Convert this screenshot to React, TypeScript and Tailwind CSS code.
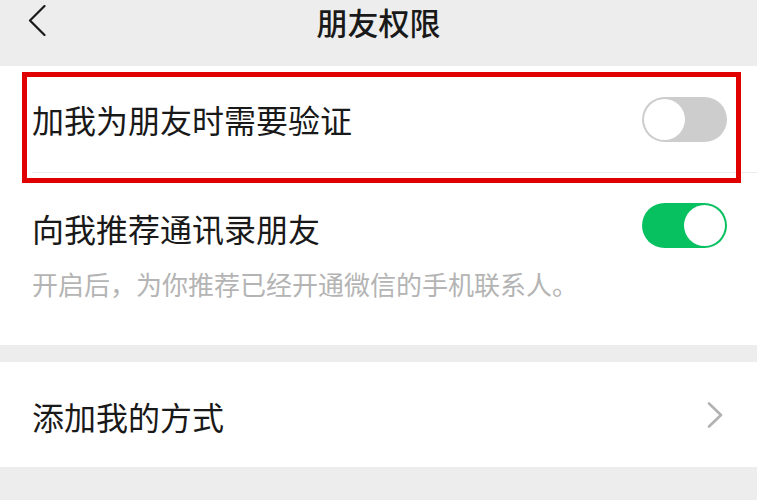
import React from "react";

const font = { fontFamily: '"Noto Sans CJK SC", "Noto Sans", sans-serif' };

function Toggle({ on }: { on: boolean }) {
    return (
        <div
            className={
                on
                    ? "relative w-[85px] h-[45px] rounded-full bg-[#07c160] shrink-0"
                    : "relative w-[85px] h-[45px] rounded-full bg-[#cdcdcd] shrink-0"
            }
        >
            <div
                className={
                    on
                        ? "absolute top-[2px] right-[2px] w-[41px] h-[41px] rounded-full bg-white"
                        : "absolute top-[2px] left-[2px] w-[41px] h-[41px] rounded-full bg-white"
                }
            />
        </div>
    );
}

export default function App() {
    return (
        <div className="relative w-[757px] h-[500px] bg-[#ededed] overflow-hidden text-[#191919]" style={font}>
            {/* Header */}
            <header className="relative h-[66px] flex items-center justify-center">
                <svg className="absolute left-[28px] top-[5px]" width="18" height="31" viewBox="0 0 18 31" fill="none">
                    <path d="M16.5 1 L2 15.5 L16.5 30" stroke="#1a1a1a" strokeWidth="2.2" strokeLinecap="round" strokeLinejoin="round" />
                </svg>
                <h1 className="text-[31px] leading-none font-medium -mt-[24px]">朋友权限</h1>
            </header>

            {/* Permissions */}
            <section className="bg-white">
                <div className="h-[106px] flex items-center justify-between pl-[32px] pr-[30px]">
                    <span className="text-[32px] leading-none">加我为朋友时需要验证</span>
                    <Toggle on={false} />
                </div>
                <div className="ml-[32px] h-px bg-[#ececec]" />
                <div className="pt-[30px] pb-[48px] pl-[32px] pr-[30px]">
                    <div className="h-[45px] flex items-center justify-between">
                        <span className="text-[32px] leading-none mt-[4px]">向我推荐通讯录朋友</span>
                        <Toggle on={true} />
                    </div>
                    <p className="mt-[23px] text-[26px] leading-[26px] text-[#b4b4b4]">开启后，为你推荐已经开通微信的手机联系人。</p>
                </div>
            </section>

            <div className="h-[17px]" />

            <section className="bg-white h-[105px] flex items-center justify-between pl-[32px] pr-[34px]">
                <span className="text-[32px] leading-none mt-[2px]">添加我的方式</span>
                <svg width="16" height="26" viewBox="0 0 16 26" fill="none">
                    <path d="M2 1.5 L14 13 L2 24.5" stroke="#b2b2b2" strokeWidth="2.6" strokeLinecap="round" strokeLinejoin="round" />
                </svg>
            </section>

            {/* Annotation box */}
            <div className="absolute left-[22px] top-[72px] w-[719px] h-[111px] border-[5px] border-[#e10000] pointer-events-none" />
        </div>
    );
}
